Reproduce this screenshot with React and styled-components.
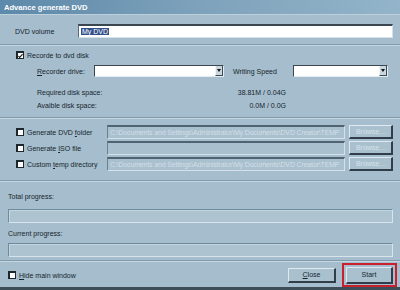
import React from 'react'
import styled, { createGlobalStyle } from 'styled-components'

const Global = createGlobalStyle`
    html, body { margin: 0; padding: 0; background: #a5bdcc; }
    body { font-family: "Liberation Sans", Arial, sans-serif; }
`

const Window = styled.div`
    width: 400px;
    height: 290px;
    background: #a5bdcc;
    display: flex;
    flex-direction: column;
    overflow: hidden;
    color: #17252e;
    font-size: 7px;
    border-bottom: 3px solid #3d4e58;
    box-sizing: border-box;
`

const TitleBar = styled.div`
    height: 14px;
    flex: none;
    background: linear-gradient(to right, #5d89aa 0%, #7ea2bb 50%, #93b4c9 100%);
    color: #fff;
    font-weight: bold;
    font-size: 7.6px;
    display: flex;
    align-items: center;
    padding-left: 4px;
    border-bottom: 1px solid #bcd0dc;
`

const Row = styled.div`
    display: flex;
    align-items: center;
    height: ${p => p.h || 14}px;
    margin-top: ${p => p.mt || 0}px;
    padding-left: ${p => p.pl || 0}px;
    padding-right: ${p => p.pr || 7}px;
    flex: none;
`

const Label = styled.span`
    width: ${p => p.w ? p.w + 'px' : 'auto'};
    margin-left: ${p => p.ml || 0}px;
    flex: none;
    white-space: nowrap;
`

const Value = styled.span`
    width: ${p => p.w}px;
    text-align: right;
    flex: none;
`

const Divider = styled.div`
    height: 1px;
    margin-top: ${p => p.mt || 0}px;
    background: #7f9bad;
    border-bottom: 1px solid #c6d7e1;
    flex: none;
`

const TextField = styled.div`
    flex: 1;
    height: 14px;
    box-sizing: border-box;
    background: ${p => p.disabled ? '#a9c0ce' : '#fff'};
    border-top: 2px solid ${p => p.disabled ? '#4f6372' : '#3a4650'};
    border-left: 1px solid ${p => p.disabled ? '#6b8293' : '#596a76'};
    border-bottom: 1px solid #d4e1e9;
    border-right: 1px solid #d4e1e9;
    display: flex;
    align-items: center;
    padding-left: 2px;
    overflow: hidden;
    white-space: nowrap;
    letter-spacing: ${p => p.disabled ? '-0.16px' : 'normal'};
    color: ${p => p.disabled ? '#d3dfe7' : '#17252e'};
`

const Selected = styled.span`
    background: #33508a;
    color: #fff;
    padding: 0 1px;
`

const Combo = styled.div`
    width: ${p => p.w}px;
    height: 12px;
    box-sizing: border-box;
    background: #fff;
    border-top: 1px solid #3a4650;
    border-left: 1px solid #3a4650;
    border-bottom: 1px solid #e2ebf0;
    border-right: 1px solid #e2ebf0;
    display: flex;
    justify-content: flex-end;
    flex: none;
`

const ComboButton = styled.div`
    width: 8px;
    background: #c9d6de;
    border-left: 1px solid #eef3f6;
    border-right: 1px solid #3c4a54;
    border-bottom: 1px solid #3c4a54;
    box-sizing: border-box;
    display: flex;
    align-items: center;
    justify-content: center;
    &::after {
        content: "";
        border-left: 2px solid transparent;
        border-right: 2px solid transparent;
        border-top: 3px solid #111;
    }
`

const Box = styled.span`
    width: 8px;
    height: 8px;
    box-sizing: border-box;
    background: #fff;
    border: 1px solid #1b262d;
    border-top-width: 2px;
    border-left-width: 2px;
    margin-right: ${p => p.gap || 3}px;
    flex: none;
    display: flex;
    align-items: center;
    justify-content: center;
`

const CheckField = styled.label`
    display: flex;
    align-items: center;
    width: ${p => p.w ? p.w + 'px' : 'auto'};
    flex: none;
`

const Button = styled.div`
    width: ${p => p.w}px;
    height: ${p => p.h || 14}px;
    box-sizing: border-box;
    background: #a9c1cf;
    border-top: 1px solid #dfe9ef;
    border-left: 1px solid #dfe9ef;
    border-right: 2px solid #2f3e48;
    border-bottom: 2px solid #2f3e48;
    display: flex;
    align-items: center;
    justify-content: center;
    color: ${p => p.disabled ? '#d6e2e9' : '#17252e'};
    margin-left: ${p => p.ml || 0}px;
    flex: none;
`

const Highlight = styled.div`
    width: 55px;
    height: 24px;
    box-sizing: border-box;
    border: 2px solid #c8202c;
    display: flex;
    align-items: center;
    justify-content: center;
    margin-left: 6px;
    flex: none;
`

const Progress = styled.div`
    height: 14px;
    margin: ${p => p.mt || 0}px 7px 0 8px;
    box-sizing: border-box;
    background: #adc3d0;
    border-top: 1px solid #6c8ba0;
    border-left: 1px solid #6c8ba0;
    border-bottom: 1px solid #d8e4eb;
    border-right: 1px solid #d8e4eb;
    box-shadow: inset 1px 1px 0 #c4d5df;
    flex: none;
`

const Spacer = styled.div`
    flex: 1;
`

const U = styled.span`
    text-decoration: underline;
`

const Check = () => (
    <svg width="6" height="6" viewBox="0 0 6 6">
        <path d="M0.5 3 L2 4.6 L5.5 0.8" stroke="#111" strokeWidth="1.3" fill="none" />
    </svg>
)

const App = () => {
    const outputs = [
        { label: <>Generate DVD <U>f</U>older</>, path: 'C:\\Documents and Settings\\Administrator\\My Documents\\DVD Creator\\TEMP' },
        { label: <>Generate <U>I</U>SO file</>, path: '' },
        { label: <>Custom <U>t</U>emp directory</>, path: 'C:\\Documents and Settings\\Administrator\\My Documents\\DVD Creator\\TEMP' },
    ]

    return (
        <Window>
            <Global />
            <TitleBar>Advance generate DVD</TitleBar>

            <Row mt={9} pl={15}>
                <Label w={63}>DVD volume</Label>
                <TextField><Selected>My DVD</Selected></TextField>
            </Row>

            <Divider mt={6} />

            <Row h={10} mt={4} pl={16}>
                <CheckField>
                    <Box><Check /></Box>
                    Recorde to dvd disk
                </CheckField>
            </Row>

            <Row h={12} mt={5} pl={37}>
                <Label w={57}><U>R</U>ecorder drive:</Label>
                <Combo w={130}><ComboButton /></Combo>
                <Label w={60} ml={9}>Writing Speed</Label>
                <Combo w={95}><ComboButton /></Combo>
            </Row>

            <Row h={10} mt={10} pl={37}>
                <Label w={100}>Required disk space:</Label>
                <Value w={149}>38.81M / 0.04G</Value>
            </Row>
            <Row h={10} mt={3} pl={37}>
                <Label w={100}>Avaible disk space:</Label>
                <Value w={149}>0.0M / 0.0G</Value>
            </Row>

            <Divider mt={7} />

            {outputs.map((o, i) => (
                <Row key={i} mt={i === 0 ? 6 : 2} pl={16}>
                    <CheckField w={91}>
                        <Box />
                        <span>{o.label}</span>
                    </CheckField>
                    <TextField disabled>{o.path}</TextField>
                    <Button w={44} ml={4} disabled>Browse...</Button>
                </Row>
            ))}

            <Divider mt={9} />

            <Row h={10} mt={9} pl={8}>Total progress:</Row>
            <Progress mt={8} />
            <Row h={10} mt={5} pl={8}>Current progress:</Row>
            <Progress mt={5} />

            <Divider mt={3} />

            <Row h={24} mt={1} pl={8} pr={3}>
                <CheckField>
                    <Box gap={3} />
                    <span><U>H</U>ide main window</span>
                </CheckField>
                <Spacer />
                <Button w={48} h={15}><span><U>C</U>lose</span></Button>
                <Highlight>
                    <Button w={47} h={17}>Start</Button>
                </Highlight>
            </Row>
        </Window>
    )
}

export default App
